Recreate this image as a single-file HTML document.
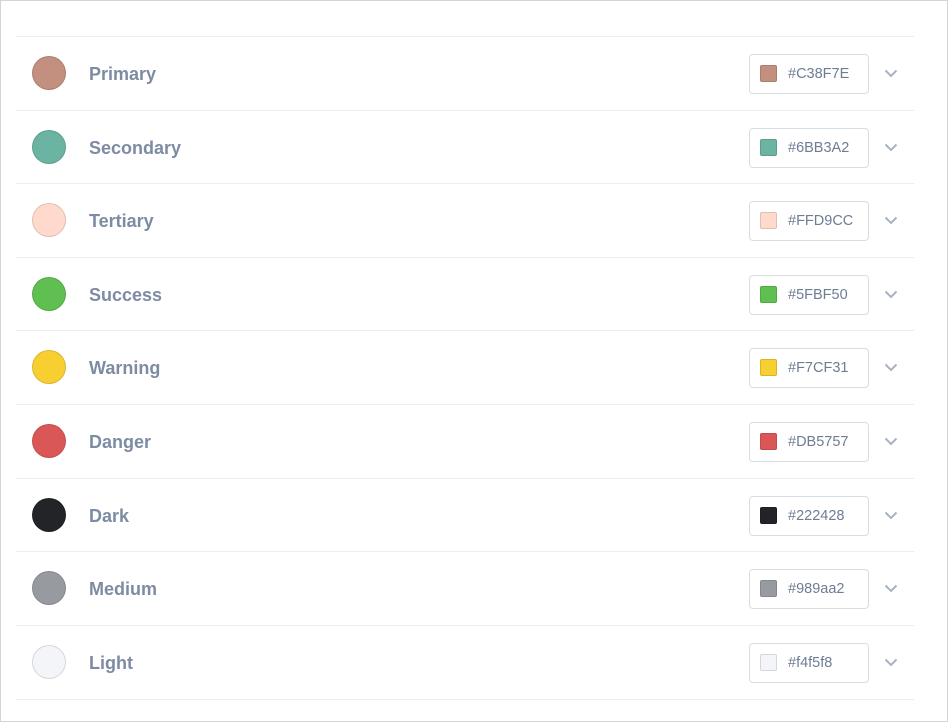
<!DOCTYPE html>
<html><head><style>
html,body{margin:0;padding:0;}
body{width:948px;height:722px;background:#fff;font-family:"Liberation Sans",sans-serif;position:relative;overflow:hidden;}
.frame{position:absolute;left:0;top:0;width:946px;height:720px;border:1px solid #d4d4d4;}
.row{position:absolute;left:16px;width:898px;height:73px;border-top:1px solid #eaeef3;}
.row.last{border-bottom:1px solid #eaeef3;}
.c{position:absolute;left:16px;top:19px;width:34px;height:34px;border-radius:50%;box-sizing:border-box;border:1px solid rgba(0,0,0,.12);}
.l{position:absolute;left:73px;top:27px;font-size:18px;font-weight:bold;color:#7d8ba3;}
.in{position:absolute;left:733px;top:17px;width:118px;height:38px;border:1px solid #d8dde4;border-radius:4px;background:#fff;}
.sw{position:absolute;left:10px;top:10px;width:17px;height:17px;border-radius:2px;box-sizing:border-box;border:1px solid rgba(0,0,0,.12);}
.t{position:absolute;left:38px;top:11px;font-size:14.5px;color:#6e7d93;}
.ch{position:absolute;left:868px;top:32px;}
</style></head><body>
<div class="frame"></div>
<div class="row" style="top:36px"><div class="c" style="background:#C38F7E"></div><div class="l">Primary</div><div class="in"><div class="sw" style="background:#C38F7E"></div><div class="t">#C38F7E</div></div><svg class="ch" width="14" height="9"><path d="M1.5 1.5 L7 7 L12.5 1.5" fill="none" stroke="#a9b2bf" stroke-width="2"/></svg></div>
<div class="row" style="top:109.5px"><div class="c" style="background:#6BB3A2"></div><div class="l">Secondary</div><div class="in"><div class="sw" style="background:#6BB3A2"></div><div class="t">#6BB3A2</div></div><svg class="ch" width="14" height="9"><path d="M1.5 1.5 L7 7 L12.5 1.5" fill="none" stroke="#a9b2bf" stroke-width="2"/></svg></div>
<div class="row" style="top:183px"><div class="c" style="background:#FFD9CC"></div><div class="l">Tertiary</div><div class="in"><div class="sw" style="background:#FFD9CC"></div><div class="t">#FFD9CC</div></div><svg class="ch" width="14" height="9"><path d="M1.5 1.5 L7 7 L12.5 1.5" fill="none" stroke="#a9b2bf" stroke-width="2"/></svg></div>
<div class="row" style="top:256.5px"><div class="c" style="background:#5FBF50"></div><div class="l">Success</div><div class="in"><div class="sw" style="background:#5FBF50"></div><div class="t">#5FBF50</div></div><svg class="ch" width="14" height="9"><path d="M1.5 1.5 L7 7 L12.5 1.5" fill="none" stroke="#a9b2bf" stroke-width="2"/></svg></div>
<div class="row" style="top:330px"><div class="c" style="background:#F7CF31"></div><div class="l">Warning</div><div class="in"><div class="sw" style="background:#F7CF31"></div><div class="t">#F7CF31</div></div><svg class="ch" width="14" height="9"><path d="M1.5 1.5 L7 7 L12.5 1.5" fill="none" stroke="#a9b2bf" stroke-width="2"/></svg></div>
<div class="row" style="top:404px"><div class="c" style="background:#DB5757"></div><div class="l">Danger</div><div class="in"><div class="sw" style="background:#DB5757"></div><div class="t">#DB5757</div></div><svg class="ch" width="14" height="9"><path d="M1.5 1.5 L7 7 L12.5 1.5" fill="none" stroke="#a9b2bf" stroke-width="2"/></svg></div>
<div class="row" style="top:477.5px"><div class="c" style="background:#222428"></div><div class="l">Dark</div><div class="in"><div class="sw" style="background:#222428"></div><div class="t">#222428</div></div><svg class="ch" width="14" height="9"><path d="M1.5 1.5 L7 7 L12.5 1.5" fill="none" stroke="#a9b2bf" stroke-width="2"/></svg></div>
<div class="row" style="top:551px"><div class="c" style="background:#989aa2"></div><div class="l">Medium</div><div class="in"><div class="sw" style="background:#989aa2"></div><div class="t">#989aa2</div></div><svg class="ch" width="14" height="9"><path d="M1.5 1.5 L7 7 L12.5 1.5" fill="none" stroke="#a9b2bf" stroke-width="2"/></svg></div>
<div class="row last" style="top:624.5px"><div class="c" style="background:#f4f5f8"></div><div class="l">Light</div><div class="in"><div class="sw" style="background:#f4f5f8"></div><div class="t">#f4f5f8</div></div><svg class="ch" width="14" height="9"><path d="M1.5 1.5 L7 7 L12.5 1.5" fill="none" stroke="#a9b2bf" stroke-width="2"/></svg></div>
</body></html>
